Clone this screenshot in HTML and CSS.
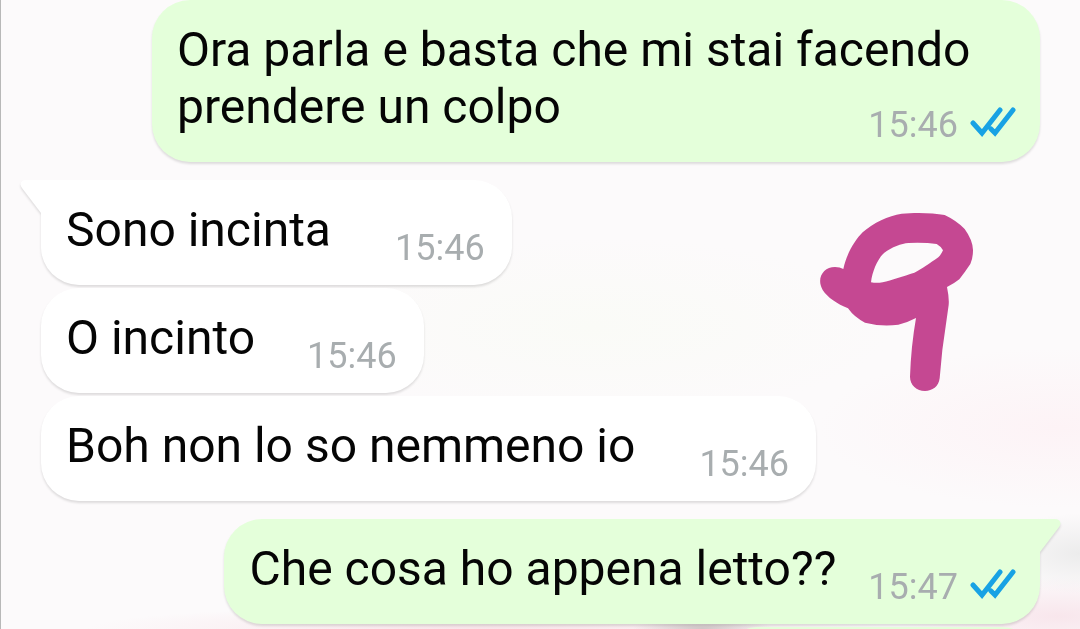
FILE: index.html
```html
<!DOCTYPE html>
<html lang="it">

<head>
  <title>Chat</title>
  <meta charset="UTF-8">
  <meta name="viewport" content="width=device-width,initial-scale=1.0">
  <link rel="stylesheet" href="styles.css">
</head>

<body>
  <main class="chat">

    <div class="bubble sent">
      <span class="text">Ora parla e basta che mi stai facendo prendere un colpo</span>
      <span class="meta">
        <time>15:46</time>
        <svg class="ticks" viewBox="0 0 46 30">
          <path d="M3 16l9 10L30 3M21 22l4 4L43 3" />
        </svg>
      </span>
    </div>

    <div class="bubble received first">
      <svg class="tail" viewBox="0 0 24 36">
        <path d="M24 0H6C1 0 -1 4 2 8L21 33L24 36Z" />
      </svg>
      <span class="text">Sono incinta</span>
      <span class="meta"><time>15:46</time></span>
    </div>

    <div class="bubble received short">
      <span class="text">O incinto</span>
      <span class="meta"><time>15:46</time></span>
    </div>

    <div class="bubble received">
      <span class="text">Boh non lo so nemmeno io</span>
      <span class="meta"><time>15:46</time></span>
    </div>

    <div class="bubble sent first">
      <svg class="tail" viewBox="0 0 24 36">
        <path d="M24 0H6C1 0 -1 4 2 8L21 33L24 36Z" />
      </svg>
      <span class="text">Che cosa ho appena letto??</span>
      <span class="meta">
        <time>15:47</time>
        <svg class="ticks" viewBox="0 0 46 30">
          <path d="M3 16l9 10L30 3M21 22l4 4L43 3" />
        </svg>
      </span>
    </div>

    <div class="bubble sent next"></div>

    <!-- handwritten number -->
    <svg class="doodle" viewBox="0 0 600 660">
      <path fill-rule="evenodd" d="M130 237C140 190 165 150 188 127C220 98 265 77 305 71C345 67 400 68 434 75Q470 92 494 117Q518 150 519 180Q519 205 511 222Q495 246 478 268Q462 281 441 291Q448 325 446 345L427 480L419 565C416 590 397 603 375 603C350 603 330 585 330 560Q333 470 348 384Q322 398 295 404Q245 411 195 398Q163 382 144 355C112 342 82 322 68 300C48 265 70 231 105 231Q120 231 130 237ZM213 277C217 243 233 206 253 188C275 172 305 160 325 159Q375 157 410 162Q424 170 429 181Q423 195 415 202C390 219 365 238 343 248C310 259 275 270 248 277Q230 280 213 277Z" />
    </svg>

  </main>
</body>

</html>
```

FILE: styles.css
```css
html,
body {
  height: 100%;
  margin: 0;
  overflow: hidden;
}

.chat {
  position: relative;
  height: 100%;
  overflow: hidden;
  padding: 0 40px;
  border-left: 1px solid #b8b8b8;
  box-sizing: border-box;
  display: flex;
  flex-direction: column;
  align-items: flex-start;
  gap: 3px;
  font-family: Roboto, sans-serif;
  background:
    radial-gradient(ellipse 70px 12px at 65% 100%, #cfc5c6, transparent),
    radial-gradient(ellipse 90px 40px at 100% 88%, #ececec, transparent),
    radial-gradient(ellipse 160px 40px at 98% 98%, #f8e6ec, transparent),
    radial-gradient(ellipse 400px 24px at 45% 100%, #f8e4e9, transparent),
    radial-gradient(ellipse 240px 80px at 98% 68%, #fdf3f6, transparent),
    radial-gradient(ellipse 300px 90px at 55% 52%, #fafbf7, transparent),
    #fcfafb;
}

.bubble {
  position: relative;
  flex-shrink: 0;
  max-width: 888px;
  padding: 21px 27px 27px 25px;
  border-radius: 38px;
  box-sizing: border-box;
  filter: drop-shadow(0 2px 1px rgba(0, 0, 0, 0.12));
}

.received {
  background-color: #fff;
  fill: #fff;
}

.sent {
  align-self: flex-end;
  padding-right: 24px;
  background-color: #e4ffda;
  fill: #e4ffda;
}

.first {
  margin-top: 15px;
}

.received.first {
  border-top-left-radius: 0;
}

.sent.first {
  border-top-right-radius: 0;
}

.text {
  font-size: 48px;
  line-height: 57px;
  color: #050505;
}

.meta {
  float: right;
  display: flex;
  align-items: baseline;
  gap: 12px;
  height: 28px;
  margin: 29px 0 0 64px;
  font-size: 36px;
  line-height: 36px;
  color: #a8adaf;
}

.short .meta {
  margin-left: 52px;
}

.sent .meta {
  margin-left: 32px;
}

.ticks {
  width: 46px;
  height: 30px;
  fill: none;
  stroke: #18a2e4;
  stroke-width: 5;
  stroke-linecap: round;
}

.tail {
  position: absolute;
  top: 0;
  left: -21px;
  width: 24px;
  height: 36px;
}

.sent .tail {
  left: auto;
  right: -21px;
  transform: scaleX(-1);
}

.next {
  width: 32%;
  height: 105px;
}

.doodle {
  position: absolute;
  top: 190px;
  right: 80px;
  width: 200px;
  height: 220px;
  fill: #c54892;
}
```
